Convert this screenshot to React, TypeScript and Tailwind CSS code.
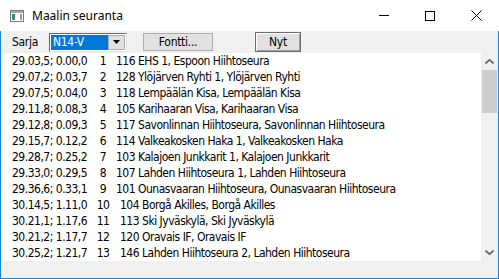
import React from "react";

const rows: [string, string, string][] = [
  ["29.03,5; 0.00,0", "1", "116 EHS 1, Espoon Hiihtoseura"],
  ["29.07,2; 0.03,7", "2", "128 Ylöjärven Ryhti 1, Ylöjärven Ryhti"],
  ["29.07,5; 0.04,0", "3", "118 Lempäälän Kisa, Lempäälän Kisa"],
  ["29.11,8; 0.08,3", "4", "105 Karihaaran Visa, Karihaaran Visa"],
  ["29.12,8; 0.09,3", "5", "117 Savonlinnan Hiihtoseura, Savonlinnan Hiihtoseura"],
  ["29.15,7; 0.12,2", "6", "114 Valkeakosken Haka 1, Valkeakosken Haka"],
  ["29.28,7; 0.25,2", "7", "103 Kalajoen Junkkarit 1, Kalajoen Junkkarit"],
  ["29.33,0; 0.29,5", "8", "107 Lahden Hiihtoseura 1, Lahden Hiihtoseura"],
  ["29.36,6; 0.33,1", "9", "101 Ounasvaaran Hiihtoseura, Ounasvaaran Hiihtoseura"],
  ["30.14,5; 1.11,0", "10", "104 Borgå Akilles, Borgå Akilles"],
  ["30.21,1; 1.17,6", "11", "113 Ski Jyväskylä, Ski Jyväskylä"],
  ["30.21,2; 1.17,7", "12", "120 Oravais IF, Oravais IF"],
  ["30.25,2; 1.21,7", "13", "146 Lahden Hiihtoseura 2, Lahden Hiihtoseura"],
];

const uiFont = { fontFamily: "'DejaVu Sans Condensed', 'DejaVu Sans', sans-serif" };

function AppIcon() {
  return (
    <svg width="14" height="12" viewBox="0 0 14 12" className="shrink-0">
      <rect x="0.5" y="0.5" width="13" height="11" fill="#fff" stroke="#7a7a7a" />
      <rect x="1" y="1" width="12" height="2" fill="#a8a8a8" />
      <rect x="2" y="4" width="3" height="6" fill="#2f8f7a" />
      <rect x="10" y="4" width="2" height="6" fill="#9a9a9a" />
    </svg>
  );
}

function TitleBar() {
  return (
    <div className="flex h-[31px] items-center bg-white">
      <div className="ml-[10px] mt-[1px]">
        <AppIcon />
      </div>
      <span className="ml-[8px] text-[12px] text-black" style={{ fontFamily: "'Noto Sans', sans-serif" }}>
        Maalin seuranta
      </span>
      <div className="ml-auto flex h-full items-center">
        <div className="flex h-full w-[46px] items-center justify-center">
          <div className="h-px w-[10px] bg-black" />
        </div>
        <div className="flex h-full w-[46px] items-center justify-center">
          <div className="h-[10px] w-[10px] border border-black" />
        </div>
        <div className="flex h-full w-[46px] items-center justify-center">
          <svg width="11" height="11" viewBox="0 0 11 11">
            <path d="M0.5 0.5 L10.5 10.5 M10.5 0.5 L0.5 10.5" stroke="#000" strokeWidth="1" />
          </svg>
        </div>
      </div>
    </div>
  );
}

function Toolbar() {
  return (
    <div className="flex h-[22px] items-center text-[12px] tracking-[-0.3px] text-black" style={uiFont}>
      <span className="ml-[11px] w-[37px]">Sarja</span>
      <div className="flex h-[19px] w-[78px] border border-t-[#696969] border-l-[#696969] border-r-[#e3e3e3] border-b-[#e3e3e3] bg-white p-px">
        <div className="flex flex-1 items-center bg-[#0078d7] pl-[2px] text-white">N14-V</div>
        <div className="flex w-[17px] items-center justify-center border border-[#adadad] bg-[#e1e1e1]">
          <svg width="7" height="4" viewBox="0 0 7 4">
            <path d="M0 0 H7 L3.5 4 Z" fill="#000" />
          </svg>
        </div>
      </div>
      <button className="ml-[16px] flex h-[18px] w-[70px] items-center justify-center border border-[#adadad] bg-[#e1e1e1]">
        Fontti...
      </button>
      <button className="ml-[42px] flex h-[20px] w-[46px] items-center justify-center border border-[#6d6d6d] bg-[#e1e1e1] shadow-[inset_1px_1px_0_#ffffff,inset_-1px_-1px_0_#a0a0a0]">
        Nyt
      </button>
    </div>
  );
}

function Chevron({ up }: { up?: boolean }) {
  return (
    <svg width="9" height="5" viewBox="0 0 9 5">
      <path d={up ? "M0.5 4.5 L4.5 0.8 L8.5 4.5" : "M0.5 0.5 L4.5 4.2 L8.5 0.5"} stroke="#606060" strokeWidth="1.6" fill="none" />
    </svg>
  );
}

function ResultList() {
  return (
    <div className="ml-[2px] flex h-[208px]">
      <div className="flex-1 overflow-hidden bg-white" style={uiFont}>
        {rows.map(([time, rank, team]) => (
          <div key={rank} className="flex h-[16px] items-center whitespace-pre text-[12px] tracking-[-0.5px] text-black">
            <span className="ml-[9px] w-[83px]">{time}</span>
            <span className="w-[16px] text-center">{rank}</span>
            <span className={rank.length > 1 ? "ml-[9px]" : "ml-[5px]"}>{team}</span>
          </div>
        ))}
      </div>
      <div className="flex w-[17px] flex-col bg-[#f0f0f0]">
        <div className="flex h-[17px] items-center justify-center">
          <Chevron up />
        </div>
        <div className="mx-px h-[43px] bg-[#cdcdcd]" />
        <div className="flex-1" />
        <div className="flex h-[17px] items-center justify-center">
          <Chevron />
        </div>
      </div>
    </div>
  );
}

export default function App() {
  return (
    <div className="h-[279px] w-[499px] overflow-hidden bg-white">
      <TitleBar />
      <div className="flex h-[248px] flex-col border-x border-b border-[#1883d7] bg-[#f0f0f0]">
        <Toolbar />
        <ResultList />
      </div>
    </div>
  );
}
